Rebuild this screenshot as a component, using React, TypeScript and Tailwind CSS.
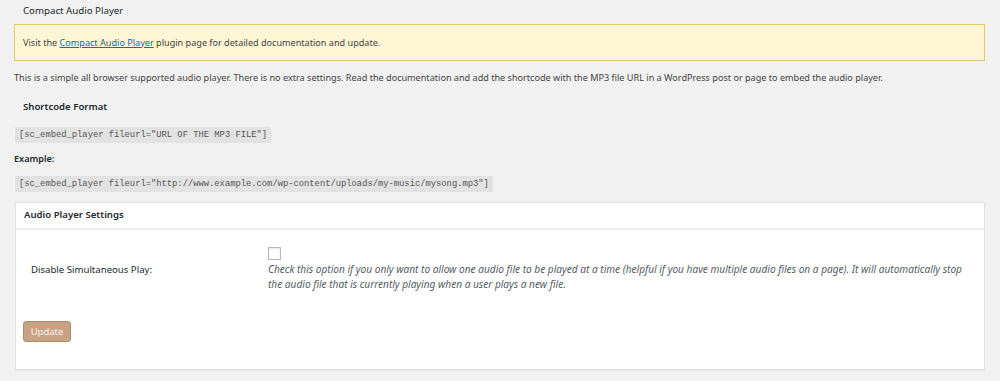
export default function App() {
  const sans = { fontFamily: '"Noto Sans", "Open Sans", sans-serif' };
  return (
    <div className="min-h-[381px] w-full bg-[#f1f1f1] pl-[14px] pr-[15px] text-[#444] text-[9.1px]" style={sans}>
      <h1 className="h-[24px] pl-[9px] pt-[3px] text-[9.7px] leading-[16px] text-[#23282d] font-normal">
        Compact Audio Player
      </h1>

      {/* Notice */}
      <div className="h-[37px] border border-[#e2c965] bg-[#fff6d6] pl-[8px] flex items-center text-[#444]">
        <p>
          Visit the{" "}
          <a href="#" className="text-[#0073aa] underline">
            Compact Audio Player
          </a>{" "}
          plugin page for detailed documentation and update.
        </p>
      </div>

      <p className="mt-[9px] leading-[15px]">
        This is a simple all browser supported audio player. There is no extra settings. Read the documentation and add the
        shortcode with the MP3 file URL in a WordPress post or page to embed the audio player.
      </p>

      <h2 className="mt-[14px] pl-[9px] text-[9.6px] leading-[16px] font-semibold text-[#23282d]">Shortcode Format</h2>

      <div className="mt-[12px] flex">
        <code
          className="h-[16px] px-[4px] bg-[#e2e2e2] text-[#555] text-[8.8px] leading-[16px] ml-[1px]"
          style={{ fontFamily: '"Liberation Mono", monospace' }}
        >
          [sc_embed_player fileurl="URL OF THE MP3 FILE"]
        </code>
      </div>

      <p className="mt-[8px] leading-[15px] font-semibold text-[#23282d]">Example:</p>

      <div className="mt-[10px] flex">
        <code
          className="h-[16px] px-[4px] bg-[#e2e2e2] text-[#555] text-[8.8px] leading-[16px] ml-[1px]"
          style={{ fontFamily: '"Liberation Mono", monospace' }}
        >
          [sc_embed_player fileurl="http://www.example.com/wp-content/uploads/my-music/mysong.mp3"]
        </code>
      </div>

      {/* Settings panel */}
      <div className="mt-[10px] ml-[1px] h-[168px] border border-[#e3e3e3] bg-white shadow-[0_1px_1px_rgba(0,0,0,0.04)]">
        <div className="h-[27px] border-b-2 border-[#f0f0f0] pl-[8px] flex items-center">
          <h3 className="text-[9.6px] font-semibold text-[#23282d]">Audio Player Settings</h3>
        </div>

        <div className="flex pt-[17px]">
          <div className="w-[252px] pl-[15px] pt-[15px] text-[9.6px] text-[#23282d] leading-[15px]">
            Disable Simultaneous Play:
          </div>
          <div className="flex-1 pr-[18px]">
            <div className="w-[13px] h-[13px] border border-[#b4b9be] bg-white shadow-[inset_0_1px_2px_rgba(0,0,0,0.1)]" />
            <p className="mt-[2px] italic text-[10.1px] text-[#555d66] leading-[15px]">
              Check this option if you only want to allow one audio file to be played at a time (helpful if you have multiple
              audio files on a page). It will automatically stop the audio file that is currently playing when a user plays a
              new file.
            </p>
          </div>
        </div>

        <div className="pl-[7px] pt-[29px]">
          <button className="h-[21px] w-[48px] rounded-[3px] border border-[#b48e6c] bg-[#c7a283] text-[#f8f4ef] text-[9.5px] leading-[19px]">
            Update
          </button>
        </div>
      </div>
    </div>
  );
}
